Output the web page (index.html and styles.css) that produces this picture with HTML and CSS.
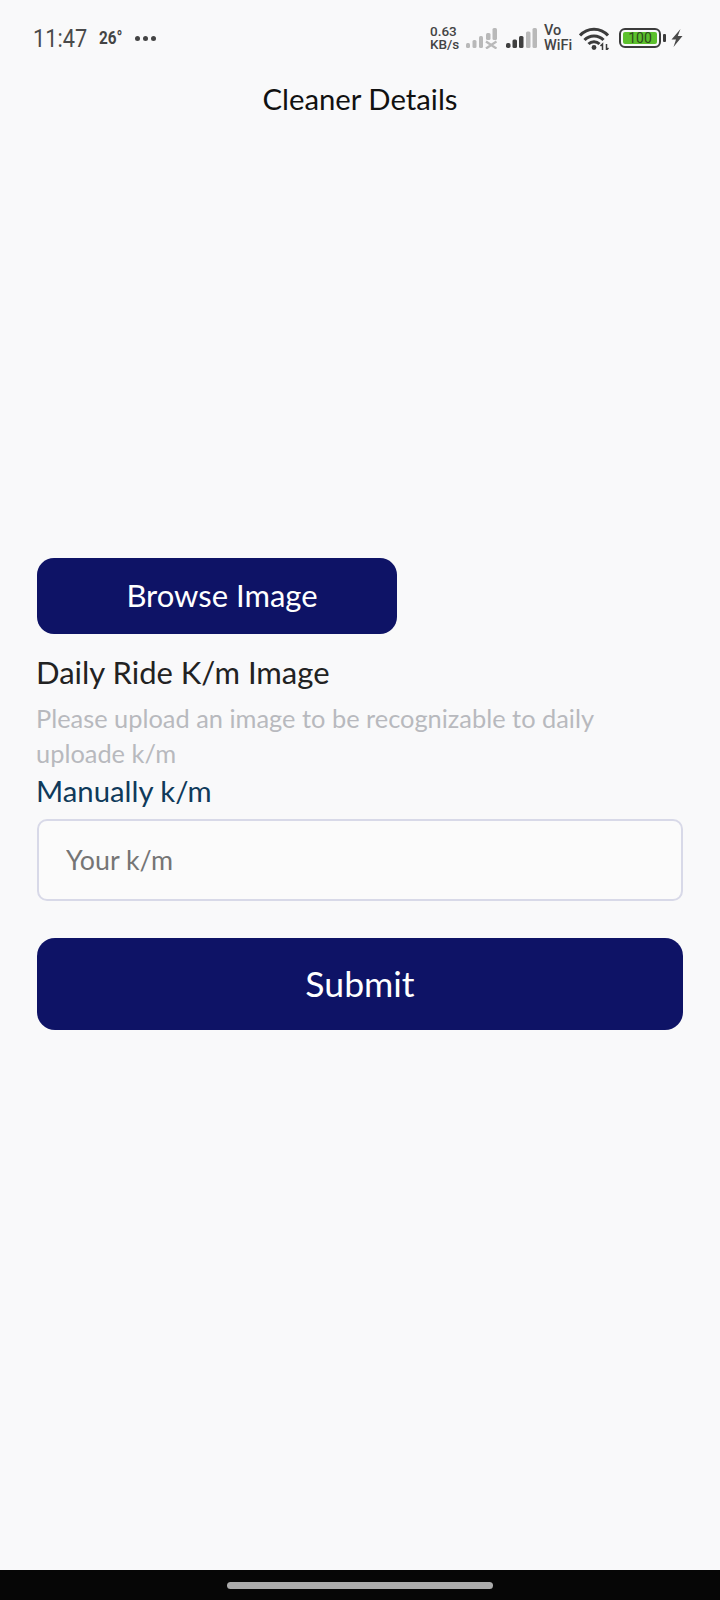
FILE: index.html
```html
<!DOCTYPE html>
<html lang="en">
<head>
<meta charset="utf-8">
<title>Cleaner Details</title>
<link rel="stylesheet" href="styles.css">
</head>
<body>
<div class="screen">
  <header class="status">
    <div class="status-left">
      <span class="time">11:47</span>
      <span class="temp">26°</span>
      <span class="dots"><i></i><i></i><i></i></span>
    </div>
    <div class="status-right">
      <span class="speed">0.63<br>KB/s</span>
      <svg class="sig-off" width="31" height="21" viewBox="0 0 31 21">
        <g fill="#b9b9b9">
          <rect x="0" y="15" width="4" height="5" rx="1.500"/>
          <rect x="6.500" y="12" width="4" height="8" rx="1.500"/>
          <rect x="13" y="8" width="4" height="12" rx="1.500"/>
          <rect x="20" y="5" width="4.500" height="7" rx="1.500"/>
          <rect x="26.500" y="0" width="4.500" height="12" rx="1.500"/>
        </g>
        <path d="M20 13.500l10.500 7M30.500 13.500l-10.500 7" stroke="#b9b9b9" stroke-width="2.400" fill="none"/>
      </svg>
      <svg class="sig-on" width="31" height="21" viewBox="0 0 31 21">
        <rect x="0" y="15" width="4.500" height="5" rx="1.800" fill="#3f3f3f"/>
        <rect x="6.500" y="11.500" width="4.500" height="8.500" rx="1.500" fill="#3f3f3f"/>
        <rect x="13" y="8" width="4.500" height="12" rx="1.500" fill="#3f3f3f"/>
        <rect x="20" y="3.500" width="4.500" height="16.500" rx="1.500" fill="#b9b9b9"/>
        <rect x="26.500" y="0" width="4.500" height="20" rx="1.500" fill="#b9b9b9"/>
      </svg>
      <span class="vowifi">Vo<br>WiFi</span>
      <svg class="wifi" width="30" height="23" viewBox="0 0 30 23">
        <g fill="none" stroke="#3c3c3c" stroke-width="3">
          <path d="M1 8.500C8.500 0 21.500 0 29 8.500"/>
          <path d="M5.500 13C10.500 7.500 19.500 7.500 24.500 13"/>
          <path d="M9.500 17C12.500 14 17.500 14 20.500 17"/>
        </g>
        <circle cx="15" cy="20.500" r="2.400" fill="#3c3c3c"/>
        <path d="M23.500 23v-6l-2 2M27.500 17v6l2-2" stroke="#3c3c3c" stroke-width="1.500" fill="none"/>
      </svg>
      <div class="battery-wrap">
        <div class="battery"><span class="level">100</span></div>
        <span class="nub"></span>
      </div>
      <svg class="bolt" width="12" height="18" viewBox="0 0 12 18">
        <path d="M9.500 0L0.500 10.500h4.500L2.500 18 11.500 7H6.800z" fill="#4a4a4a"/>
      </svg>
    </div>
  </header>

  <h1 class="title">Cleaner Details</h1>

  <main class="form">
    <button class="btn browse" type="button">Browse Image</button>
    <h2 class="label">Daily Ride K/m Image</h2>
    <p class="hint">Please upload an image to be recognizable to daily uploade k/m</p>
    <label class="manual" for="km">Manually k/m</label>
    <input class="field" id="km" type="text" placeholder="Your k/m">
    <button class="btn submit" type="button">Submit</button>
  </main>

  <footer class="navbar"><span class="handle"></span></footer>
</div>
</body>
</html>
```
FILE: styles.css
```css
* { box-sizing: border-box; }
html, body { margin: 0; padding: 0; }
body { font-family: "Lato", "Noto Sans", sans-serif; background: #f9f9f9; }
.screen {
  width: 720px;
  height: 1600px;
  display: flex;
  flex-direction: column;
  background: #f9f9fa;
  overflow: hidden;
}
.status {
  height: 78px;
  flex: none;
  display: flex;
  justify-content: space-between;
  align-items: center;
  padding: 0 37px 2px 33px;
  color: #444;
}
.status-left { display: flex; align-items: center; }
.time {
  width: 53px;
  white-space: nowrap;
  font: 400 26.500px/1 "Roboto", sans-serif;
  color: #4a4a4a;
  transform: scaleX(.82);
  transform-origin: left center;
}
.temp {
  width: 24px;
  margin-left: 13px;
  white-space: nowrap;
  font: 700 18px/1 "Roboto", sans-serif;
  color: #444;
  transform: scaleX(.85);
  transform-origin: left center;
}
.dots { display: flex; gap: 3px; margin-left: 12px; }
.dots i { width: 5px; height: 5px; border-radius: 50%; background: #444; }
.status-right { display: flex; align-items: center; }
.speed {
  width: 29px;
  margin-right: 7px;
  font: 500 13.500px/13px "Roboto", sans-serif;
  color: #444;
  white-space: nowrap;
}
.sig-off { margin-right: 9px; }
.sig-on { margin-right: 7px; }
.vowifi {
  width: 28px;
  margin-right: 7px;
  font: 500 14.500px/15px "Roboto", sans-serif;
  color: #444;
  white-space: nowrap;
}
.wifi { margin-right: 10px; }
.battery-wrap { display: flex; align-items: center; gap: 2px; margin-right: 5px; }
.battery {
  width: 42px;
  height: 20px;
  border: 2px solid #3c3c3c;
  border-radius: 6px;
  padding: 2px;
  display: flex;
}
.level {
  flex: 1;
  background: #5cc02c;
  border-radius: 2px;
  color: #2d4a1c;
  font: 400 14px/12px "Roboto", sans-serif;
  text-align: center;
}
.nub { width: 3px; height: 8px; background: #3c3c3c; border-radius: 1px; }
.bolt { display: block; }
.title {
  margin: 0;
  height: 44px;
  flex: none;
  text-align: center;
  font-weight: 400;
  font-size: 29.300px;
  line-height: 42px;
  color: #111;
}
.form {
  flex: 1;
  display: flex;
  flex-direction: column;
  align-items: flex-start;
  padding: 436px 37px 0;
}
.btn {
  border: 0;
  background: #0e1366;
  color: #fff;
  font-family: inherit;
  display: block;
}
.browse {
  width: 360px;
  height: 76px;
  border-radius: 17px;
  font-size: 31px;
  padding: 0 0 2px 10px;
}
.label {
  margin: 17px 0 0 -1px;
  font-size: 31px;
  font-weight: 400;
  line-height: 42px;
  color: #222;
}
.hint {
  margin: 8px 0 0 -1px;
  font-size: 25.400px;
  line-height: 35px;
  color: #b8b9be;
  width: 610px;
}
.manual {
  margin-left: -1px;
  font-size: 29.300px;
  line-height: 40px;
  color: #0f3a5a;
}
.field {
  margin-top: 8px;
  width: 646px;
  height: 82px;
  border: 2px solid #d8d9e8;
  border-radius: 10px;
  background: #fbfbfb;
  padding: 0 27px;
  font: inherit;
  font-size: 26.800px;
}
.field::placeholder { color: #757575; opacity: 1; }
.submit {
  margin-top: 37px;
  width: 646px;
  height: 92px;
  border-radius: 18px;
  font-size: 35.600px;
  padding: 0 0 2px;
}
.navbar {
  flex: none;
  height: 30px;
  background: #060606;
  display: flex;
  justify-content: center;
  align-items: center;
}
.handle { width: 266px; height: 7px; border-radius: 4px; background: #aaa; }
```
